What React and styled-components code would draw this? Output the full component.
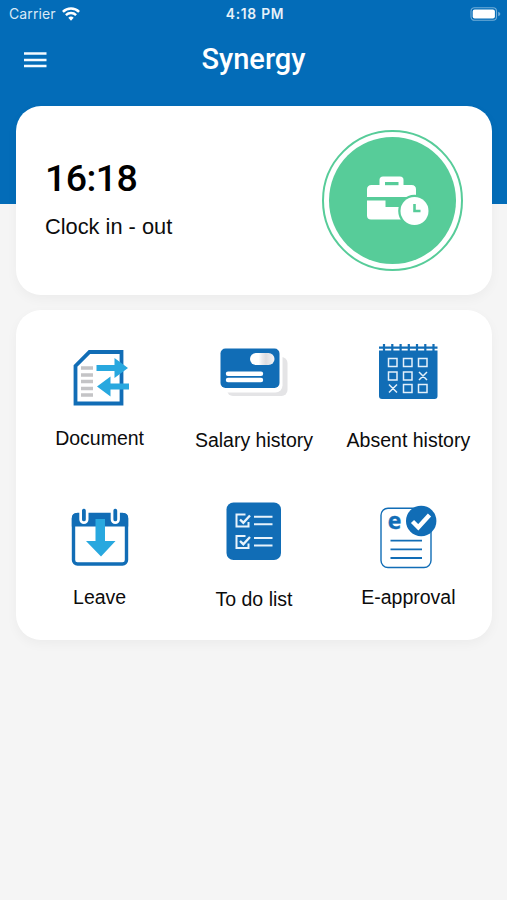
import React from 'react';
import styled, { createGlobalStyle } from 'styled-components';

const BLUE = '#036cb8';
const ICON_BLUE = '#116db6';
const LIGHT_BLUE = '#28a8df';
const GREEN = '#57cc99';

const GlobalStyle = createGlobalStyle`
  * {
    box-sizing: border-box;
  }
  body {
    margin: 0;
    background: #f5f5f5;
    font-family: 'Liberation Sans', Arial, sans-serif;
    color: #0c0c0c;
  }
`;

const Screen = styled.div`
  min-height: 900px;
  background: #f5f5f5;
  overflow: hidden;
`;

const Header = styled.header`
  height: 204px;
  background: ${BLUE};
  color: #fff;
`;

const StatusBar = styled.div`
  display: grid;
  grid-template-columns: 1fr auto 1fr;
  align-items: center;
  height: 27px;
  padding: 0 6px 0 9px;
  font-family: Inter, sans-serif;
  font-size: 14px;
`;

const Carrier = styled.div`
  display: flex;
  align-items: center;
  gap: 6px;
  color: #d9e9f6;
  letter-spacing: 0.12px;
`;

const StatusTime = styled.div`
  font-weight: 600;
  font-size: 13.8px;
  letter-spacing: 0.75px;
  color: #e6f1f9;
`;

const Battery = styled.div`
  justify-self: end;
  display: flex;
`;

const NavBar = styled.div`
  display: grid;
  grid-template-columns: 70px 1fr 70px;
  align-items: center;
  height: 65px;
`;

const MenuButton = styled.button`
  display: flex;
  padding: 0 0 0 24px;
  border: 0;
  background: none;
`;

const Title = styled.h1`
  margin: 0;
  text-align: center;
  font-family: Roboto, sans-serif;
  font-size: 29px;
  font-weight: 500;
  line-height: 65px;
`;

const Content = styled.main`
  display: flex;
  flex-direction: column;
  gap: 15px;
  margin-top: -98px;
  padding: 0 15px 0 16px;
`;

const Card = styled.section`
  border-radius: 25px;
  background: #fff;
  box-shadow: 0 4px 12px rgba(0, 0, 0, 0.04);
`;

const ClockCard = styled(Card)`
  display: flex;
  justify-content: space-between;
  height: 189px;
  padding: 24px 29px 0 29px;
`;

const ClockTime = styled.div`
  margin-top: 25px;
  font-family: Roboto, sans-serif;
  font-size: 37.5px;
  font-weight: 500;
  line-height: 46px;
  letter-spacing: -0.6px;
  color: #000;
`;

const ClockLabel = styled.div`
  margin-top: 13px;
  font-size: 21.8px;
  line-height: 26px;
`;

const ClockButton = styled.button`
  display: flex;
  align-items: center;
  justify-content: center;
  width: 141px;
  height: 141px;
  padding: 0;
  border: 2px solid ${GREEN};
  border-radius: 50%;
  background: #fff;
`;

const ClockDisc = styled.span`
  display: flex;
  align-items: center;
  justify-content: center;
  width: 127px;
  height: 127px;
  border-radius: 50%;
  background: ${GREEN};
`;

const MenuCard = styled(Card)`
  display: grid;
  grid-template-columns: repeat(3, 154.4px);
  grid-template-rows: 160px 140px;
  justify-content: center;
  height: 330px;
  padding-top: 30px;
`;

const MenuItem = styled.div`
  display: flex;
  flex-direction: column;
  align-items: center;
`;

const IconSlot = styled.div`
  height: ${({ $height }) => $height}px;
`;

const ItemLabel = styled.div`
  font-size: 19.5px;
  line-height: 24px;
  white-space: nowrap;
`;

// Every menu icon is drawn on the same 80x70 canvas.
const MenuIcon = ({ children }) => (
  <svg width="80" height="70" viewBox="0 0 80 70" fill="none" display="block">
    {children}
  </svg>
);

const DocumentIcon = () => (
  <MenuIcon>
    <path d="M29.5 12H61.5V63.5H15.5V26Z" stroke={ICON_BLUE} strokeWidth="3.8" />
    <path
      d="M21 28H33M21 35H33M21 41.5H33M21 48.5H33M21 55H33"
      stroke="#c4c4c6"
      strokeWidth="3.6"
    />
    <path d="M36.5 25H54.5V18L68 28L54.5 38V31H36.5Z" fill={LIGHT_BLUE} />
    <path d="M69 43.5H50.5V36.5L37 46.5L50.5 56.5V49.5H69Z" fill={LIGHT_BLUE} />
  </MenuIcon>
);

const SalaryIcon = () => (
  <MenuIcon>
    <defs>
      <linearGradient id="chip">
        <stop offset="0.35" stopColor="#fff" />
        <stop offset="0.48" stopColor="#ececef" />
        <stop offset="0.65" stopColor="#dcdce0" />
        <stop offset="1" stopColor="#f4f4f6" />
      </linearGradient>
    </defs>
    <rect x="13" y="17" width="60.5" height="39" rx="6" fill="#e4e4e6" />
    <rect x="4" y="6" width="64.5" height="46.5" rx="7" fill="#fff" />
    <rect x="6.5" y="8.5" width="59" height="39.5" rx="5" fill={ICON_BLUE} />
    <rect x="36" y="13" width="24.5" height="12" rx="6" fill="url(#chip)" />
    <path
      d="M14 33.7H47M14 40H47"
      stroke="#fff"
      strokeWidth="4.4"
      strokeLinecap="round"
    />
  </MenuIcon>
);

const AbsentIcon = () => (
  <MenuIcon>
    <path
      d="M11 10.4H69.5V56Q69.5 59 66.5 59H14Q11 59 11 56Z"
      fill={ICON_BLUE}
    />
    <path
      d="M11 7.6H69.5M16 4V11M24.3 4V11M32.6 4V11M40.8 4V11M49 4V11M57.3 4V11M65.5 4V11"
      stroke={ICON_BLUE}
      strokeWidth="2.2"
    />
    <g stroke="#e3f0fa" strokeWidth="1.5">
      <path d="M20.5 18.5h8.5v8h-8.5zM35.5 18.5h8.5v8h-8.5zM50.5 18.5h8.5v8h-8.5z" />
      <path d="M20.5 32h8.5v8h-8.5zM35.5 32h8.5v8h-8.5zM51 32l8 8M59 32l-8 8" />
      <path d="M21 44.5l8 8M29 44.5l-8 8M35.5 44.5h8.5v8h-8.5zM50.5 44.5h8.5v8h-8.5z" />
    </g>
  </MenuIcon>
);

const LeaveIcon = () => (
  <MenuIcon>
    <rect x="13.5" y="14.5" width="53" height="49.5" rx="4" stroke={ICON_BLUE} strokeWidth="3.4" />
    <path d="M11.8 26.5V18Q11.8 13 17 13H63Q68.2 13 68.2 18V26.5Z" fill={ICON_BLUE} />
    <path d="M19.3 10V19.5a4.6 4.6 0 0 0 9.2 0V10ZM50.7 10V19.5a4.6 4.6 0 0 0 9.2 0V10Z" fill="#fff" />
    <path
      d="M23.9 10.6V19.4M55.3 10.6V19.4"
      stroke={ICON_BLUE}
      strokeWidth="3.8"
      strokeLinecap="round"
    />
    <path d="M35.5 19H45V41H55.5L41 56.5L26 41H35.5Z" fill={LIGHT_BLUE} />
  </MenuIcon>
);

const TodoIcon = () => (
  <MenuIcon>
    <rect x="12.5" y="2.5" width="54.5" height="57.5" rx="7" fill={ICON_BLUE} />
    <g stroke="#e8f3fb" strokeWidth="2">
      <path d="M31.5 14.5H22.5V26.5H34.5V22M40 16.8H58.5M40 24.3H58.5" />
      <path d="M26 19.5L29.3 22.7L36 15.5" strokeWidth="2.4" />
      <path d="M31.5 36H22.5V48H34.5V43.5M40 38H58.5M40 45.5H58.5" />
      <path d="M26 41L29.3 44.2L36 37" strokeWidth="2.4" />
    </g>
  </MenuIcon>
);

const ApprovalIcon = () => (
  <MenuIcon>
    <rect x="13" y="8.2" width="50" height="59.3" rx="7" stroke={ICON_BLUE} strokeWidth="1.4" />
    <text
      x="19.8"
      y="28.8"
      fill={ICON_BLUE}
      stroke={ICON_BLUE}
      strokeWidth="0.4"
      fontFamily="'Open Sans', sans-serif"
      fontWeight="700"
      fontSize="23"
    >
      e
    </text>
    <path d="M22.5 40.7H54M22.5 49.3H54M22.5 58H54" stroke={ICON_BLUE} strokeWidth="1.8" />
    <circle cx="53.2" cy="21" r="15.2" fill={ICON_BLUE} />
    <path d="M44.5 21.5L50.3 27.3L61.5 15" stroke="#fff" strokeWidth="4.4" />
  </MenuIcon>
);

const WifiIcon = () => (
  <svg width="18" height="14" viewBox="0 0 18 14" fill="none">
    <path d="M0.9 4.9A11.4 11.4 0 0 1 17.1 4.9" stroke="#fff" strokeWidth="2.5" />
    <path d="M3.9 8.1A7.2 7.2 0 0 1 14.1 8.1" stroke="#fff" strokeWidth="2.4" />
    <path d="M6.3 10.8A3.8 3.8 0 0 1 11.7 10.8L9 13.7Z" fill="#fff" />
  </svg>
);

const BatteryIcon = () => (
  <svg width="31" height="14" viewBox="0 0 31 14" fill="none">
    <rect x="1" y="0.7" width="25.5" height="12.6" rx="3.5" stroke="#72add8" strokeWidth="1.1" />
    <rect x="2.7" y="2.4" width="22.2" height="9.2" rx="2" fill="#fff" />
    <path d="M28.2 4.7Q30.4 5.5 30.4 7T28.2 9.3Z" fill="#72add8" />
  </svg>
);

const BurgerIcon = () => (
  <svg width="23" height="16" viewBox="0 0 23 16">
    <path d="M0 1.6H22.5M0 7.9H22.5M0 14.1H22.5" stroke="#f4faff" strokeWidth="2.5" />
  </svg>
);

const BriefcaseClockIcon = () => (
  <svg width="127" height="127" viewBox="0 0 127 127" fill="none">
    <path
      d="M50.5 48V43Q50.5 39.5 54 39.5H71Q74.5 39.5 74.5 43V48"
      fill="#fff"
    />
    <path
      d="M38 60V52.5Q38 48 42.5 48H82.5Q87 48 87 52.5V60Z"
      fill="#fff"
    />
    <rect x="56" y="45" width="13.5" height="3.2" fill={GREEN} />
    <path
      d="M38 63.5H56.5V70H75V82.5H42Q38 82.5 38 78.5Z"
      fill="#fff"
    />
    <circle cx="85.5" cy="74" r="16.3" fill={GREEN} />
    <circle cx="85.5" cy="74" r="14" fill="#fff" />
    <path d="M85.5 67V74H91.5" stroke={GREEN} strokeWidth="2.6" />
  </svg>
);

const menuItems = [
  { label: 'Document', Icon: DocumentIcon, height: 86 },
  { label: 'Salary history', Icon: SalaryIcon, height: 88 },
  { label: 'Absent history', Icon: AbsentIcon, height: 88 },
  { label: 'Leave', Icon: LeaveIcon, height: 85 },
  { label: 'To do list', Icon: TodoIcon, height: 87 },
  { label: 'E-approval', Icon: ApprovalIcon, height: 85 },
];

const App = () => (
  <Screen>
    <GlobalStyle />
    <Header>
      <StatusBar>
        <Carrier>
          Carrier
          <WifiIcon />
        </Carrier>
        <StatusTime>4:18 PM</StatusTime>
        <Battery>
          <BatteryIcon />
        </Battery>
      </StatusBar>
      <NavBar>
        <MenuButton aria-label="Menu">
          <BurgerIcon />
        </MenuButton>
        <Title>Synergy</Title>
      </NavBar>
    </Header>
    <Content>
      <ClockCard>
        <div>
          <ClockTime>16:18</ClockTime>
          <ClockLabel>Clock in - out</ClockLabel>
        </div>
        <ClockButton aria-label="Clock in or out">
          <ClockDisc>
            <BriefcaseClockIcon />
          </ClockDisc>
        </ClockButton>
      </ClockCard>
      <MenuCard>
        {menuItems.map(({ label, Icon, height }) => (
          <MenuItem key={label}>
            <IconSlot $height={height}>
              <Icon />
            </IconSlot>
            <ItemLabel>{label}</ItemLabel>
          </MenuItem>
        ))}
      </MenuCard>
    </Content>
  </Screen>
);

export default App;
